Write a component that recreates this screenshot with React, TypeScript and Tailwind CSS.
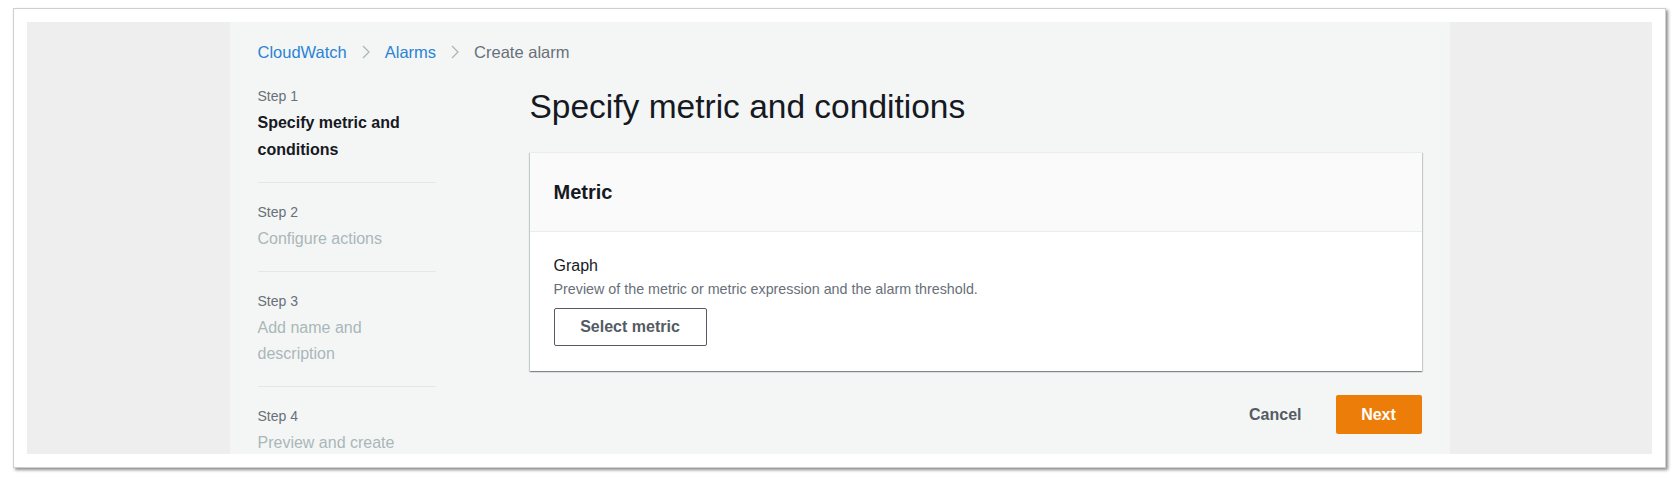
import React from 'react';

const steps = [
  { label: 'Step 1', title: 'Specify metric and conditions', active: true },
  { label: 'Step 2', title: 'Configure actions', active: false },
  { label: 'Step 3', title: 'Add name and description', active: false },
  { label: 'Step 4', title: 'Preview and create', active: false },
];

const Chevron = () => (
  <svg width="10" height="16" viewBox="0 0 10 16" className="mx-[14px] shrink-0">
    <polyline points="2,2 8,8 2,14" fill="none" stroke="#aab7b8" strokeWidth="1.3" />
  </svg>
);

const App: React.FC = () => {
  return (
    <div className="min-h-screen bg-white font-['Liberation_Sans',Arial,sans-serif]">
      {/* framed screenshot */}
      <div className="ml-[13px] mt-[8px] w-[1653px] h-[460px] border border-[#cfcfcf] bg-white p-[13px] shadow-[2px_2px_3px_rgba(0,0,0,0.45)]">
        <div className="flex h-full justify-center overflow-hidden bg-[#eeeeee]">
          <div className="w-[1220px] h-full bg-[#f4f6f6] px-[28px] pt-[19px]">
            {/* breadcrumb */}
            <div className="flex items-center text-[16.5px] leading-[22px]">
              <span className="text-[#2a84d2]">CloudWatch</span>
              <Chevron />
              <span className="text-[#2a84d2]">Alarms</span>
              <Chevron />
              <span className="text-[#687078]">Create alarm</span>
            </div>

            <div className="mt-[22px] flex gap-[94px]">
              {/* wizard steps */}
              <ul className="w-[178px] shrink-0">
                {steps.map((s, i) => (
                  <li
                    key={s.label}
                    className={`pb-[18.5px] ${i > 0 ? 'pt-[18px]' : ''} ${i < steps.length - 1 ? 'border-b border-[#e4e7e7]' : ''}`}
                  >
                    <div className="text-[14px] leading-[22px] text-[#687078]">{s.label}</div>
                    <div
                      className={`mt-[3px] text-[16px] leading-[26.5px] ${s.active ? 'font-bold text-[#16191f]' : 'text-[#aab7b8]'}`}
                    >
                      {s.title}
                    </div>
                  </li>
                ))}
              </ul>

              {/* main column */}
              <div className="w-[892px] shrink-0">
                <h1 className="mt-[2px] text-[33.5px] leading-[40px] font-normal text-[#16191f]">
                  Specify metric and conditions
                </h1>

                <div className="mt-[25px] border-t border-[#eaeded] bg-white shadow-[0_1px_1px_0_rgba(0,28,36,0.3),1px_1px_1px_0_rgba(0,28,36,0.15),-1px_1px_1px_0_rgba(0,28,36,0.15)]">
                  <div className="flex h-[79px] items-center border-b border-[#eaeded] bg-[#fafafa] px-[24px]">
                    <h2 className="text-[20px] leading-[24px] font-bold text-[#16191f]">Metric</h2>
                  </div>
                  <div className="px-[24px] pt-[23px] pb-[25px]">
                    <div className="text-[16px] leading-[22px] text-[#16191f]">Graph</div>
                    <div className="mt-[1px] text-[14.3px] leading-[22px] text-[#687078]">
                      Preview of the metric or metric expression and the alarm threshold.
                    </div>
                    <button className="mt-[8px] h-[38px] w-[153px] rounded-[2px] border border-[#545b64] bg-white text-[16px] font-bold text-[#545b64]">
                      Select metric
                    </button>
                  </div>
                </div>

                <div className="mt-[24px] flex items-center justify-end">
                  <button className="px-[20px] text-[16px] font-bold text-[#545b64]">Cancel</button>
                  <button className="ml-[14px] h-[39px] w-[86px] rounded-[2px] bg-[#ec7d08] text-[16px] font-bold text-white">
                    Next
                  </button>
                </div>
              </div>
            </div>
          </div>
        </div>
      </div>
    </div>
  );
};

export default App;
